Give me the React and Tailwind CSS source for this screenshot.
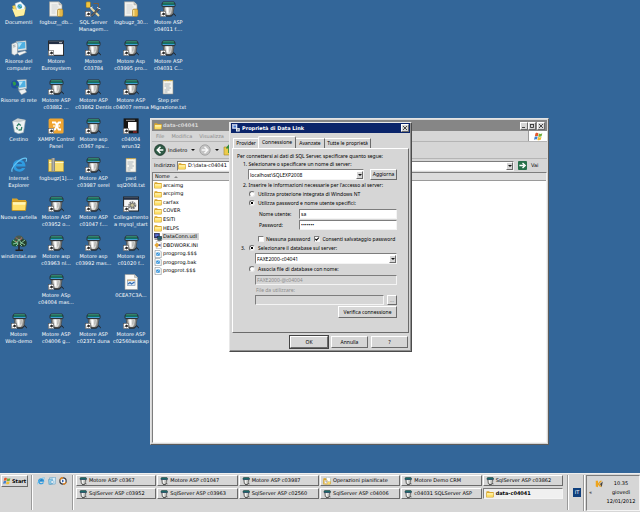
import React from 'react';

const raised = 'border border-t-white border-l-white border-r-[#6b6b6b] border-b-[#6b6b6b] bg-[#d6d6d6]';
const sunken = 'border border-t-[#7d7d7d] border-l-[#7d7d7d] border-r-[#f4f4f4] border-b-[#f4f4f4]';

/* ---------- icons ---------- */

function Shortcut() {
  return (
    <g>
      <rect x="0.3" y="10.300" width="5.400" height="5.400" fill="#fff" stroke="#3b3b3b" strokeWidth="0.5" />
      <path d="M1.600 14.800c0-1.900.8-2.500 1.700-2.500V11.200l2 1.800-2 1.700v-1.100c-.9 0-1.300.4-1.700 1.200z" fill="#111" />
    </g>
  );
}

function Engine() {
  return (
    <g>
      <path d="M3 .4h11l1.500 2.400v2.400l-1.300.8H3L1.500 5.200V2.800z" fill="#2a3138" />
      <path d="M3.400 1.300h10.200l.8 1.200H2.600z" fill="#35a07c" />
      <path d="M2.300 2.900h12.400v1.300H2.300z" fill="#0a7468" />
      <path d="M2.600 4.500h12" stroke="#4fb4f4" strokeWidth=".8" />
      <path d="M3.200 6h10.800l-1 6.500-2.500 2.500H6.500L4 12.300z" fill="#8b8b88" stroke="#3a3a3a" strokeWidth=".6" />
      <path d="M5 6.200h7l-.8 5.500-1.700 2.200H7.300L5.800 11.500z" fill="#d9d9d6" />
      <path d="M6.200 6.500h2.200v6H7z" fill="#fff" />
      <path d="M10.200 7l-.4 4.500" stroke="#9b9b98" strokeWidth=".8" />
      <path d="M6 15h5.200c1.500 0 1.300-2.300 2.700-2.300.9 0 .6 2 1.900 2.200" fill="none" stroke="#202020" strokeWidth="1" />
    </g>
  );
}

function Folder() {
  return (
    <g>
      <path d="M1 2.500h5l1.500 1.500h7.500v10H1z" fill="#dba52a" />
      <path d="M1 5.500h14.500L14.500 14.500H1z" fill="#ffe06a" stroke="#c08f1c" strokeWidth=".8" />
      <path d="M2 6.300h12.500l-.3 2.500H2z" fill="#fff6b8" />
    </g>
  );
}

const art = {
  engine: <><Engine /><Shortcut /></>,
  engineSmall: <Engine />,
  folder: <Folder />,
  docs: (
    <g>
      <path d="M1.500 5l5-1 8 2-1.500 8-8.500 1.500z" fill="#f5d75a" stroke="#c9a63a" strokeWidth=".5" />
      <path d="M4 2.500L9.500.6l4.500 4.500-.8 5-7 1z" fill="#f4fbff" stroke="#9fb3bf" strokeWidth=".5" />
      <circle cx="8.700" cy="5.500" r="2.400" fill="#58b4e0" />
      <path d="M7.200 4.600l2.200 2 1.500-.6" stroke="#2b8a57" strokeWidth=".9" fill="none" />
      <path d="M1 7.500l6 1.500 7.500-1.500-1.700 6.800-8.300 1.400z" fill="#fff0a0" />
    </g>
  ),
  dbfile: (
    <g>
      <path d="M1.500.8h9.500l3 3v11.400H1.500z" fill="#f2f2ee" stroke="#9a9a95" strokeWidth=".6" />
      <path d="M11 .8v3h3" fill="#cfcfca" stroke="#9a9a95" strokeWidth=".5" />
      <path d="M3.500 4h6M3.500 6h7M3.500 8h6M3.500 10h4M3.500 12h4" stroke="#c3c7c9" strokeWidth=".7" />
      <rect x="9.500" y="8" width="5.500" height="7.500" rx="1.500" fill="#e5b84a" stroke="#8d6b1d" strokeWidth=".5" />
      <path d="M10.800 9v6" stroke="#fff0ac" strokeWidth="1" />
    </g>
  ),
  sql: (
    <g>
      <rect x="1" y=".8" width="4.500" height="6" rx="1" fill="#f0c53e" stroke="#86661b" strokeWidth=".5" />
      <path d="M8.500 2.500h5v4" fill="none" stroke="#8a5a2c" strokeWidth=".8" />
      <path d="M6 7l8 8" stroke="#ecd9a0" strokeWidth="2" />
      <path d="M14.500 7l-8 8" stroke="#2a2a2a" strokeWidth="1.800" />
      <path d="M14.500 7l-8 8" stroke="#bdbdbd" strokeWidth=".7" />
      <path d="M12 6.500l3.500 1.500M5 7l2.500-1" stroke="#eee" strokeWidth="1" />
      <Shortcut />
    </g>
  ),
  computer: (
    <g>
      <path d="M5 1.500l10-.8.500 9-8.500 1.300z" fill="#e2e7e9" stroke="#8b969c" strokeWidth=".5" />
      <path d="M6.200 2.600l7.900-.6.300 6.200-7.200 1z" fill="#4fb0e2" />
      <path d="M7 3.200l4-.3-3.300 5z" fill="#b5e6fa" />
      <path d="M.8 4l3.700-1.500 2 1v10l-3.200 1.800L.8 13.700z" fill="#eef1f1" stroke="#8a9498" strokeWidth=".5" />
      <path d="M2 5.500l2.500-.5M2 7l2.500-.4" stroke="#6f7b80" strokeWidth=".6" />
      <path d="M6 12.800l8-2 1.700 1.500-7.200 3.200z" fill="#f5f6f6" stroke="#8a9498" strokeWidth=".5" />
    </g>
  ),
  network: (
    <g>
      <path d="M6 1l9.300-.5.400 9-7.900 1.300z" fill="#e2e7e9" stroke="#8b969c" strokeWidth=".5" />
      <path d="M7.200 2.200l7.100-.4.300 6.200-6.500.8z" fill="#4fb0e2" />
      <path d="M8 2.800l4-.2-3.300 5z" fill="#b5e6fa" />
      <circle cx="4" cy="5.500" r="4" fill="#1d4f9c" />
      <path d="M1.500 3.500c2-2 3-.5 3.500.8s-1 2.700-2.300 2.500M5 7.500l2-1-.6 2.200z" fill="#2f9a4a" />
      <path d="M7.500 11.500l6.500-1.700 1.700 3.200-5.200 2.800z" fill="#eff2f2" stroke="#8a9498" strokeWidth=".5" />
    </g>
  ),
  blankwin: (
    <g>
      <rect x=".6" y="1" width="15" height="14.300" fill="#fff" stroke="#1f2023" strokeWidth="1" />
      <rect x="1" y="1.300" width="14.200" height="2.800" fill="#222e44" />
      <path d="M11 2.700h3" stroke="#e3e3e3" strokeWidth=".8" />
      <Shortcut />
    </g>
  ),
  text: (
    <g>
      <path d="M3 1.500h10v13.500H3z" fill="#f4f4ee" stroke="#8d8d86" strokeWidth=".6" />
      <path d="M3.500 1.700h9" stroke="#d5a92e" strokeWidth="1.200" strokeDasharray="1 .6" />
      <path d="M4.500 5h6M4.500 7h5M6 9h5M4.500 11h5M4.500 13h3" stroke="#8b98a4" strokeWidth=".7" />
    </g>
  ),
  bin: (
    <g>
      <path d="M1.500 3.500L6.500.6l8 1.500-2 12.500-5 1.200-4-1.700z" fill="#eef3f4" stroke="#94a3a8" strokeWidth=".6" />
      <path d="M1.500 3.500l6 1 7-2.300L7.500.8z" fill="#c4ced1" />
      <path d="M6 8l1.800-2.200 2 1.700M10.800 9l-.6 2.800-2.700.2M6.500 11.500l-1-2.500" stroke="#2d7e63" strokeWidth="1.300" fill="none" />
    </g>
  ),
  xampp: (
    <g>
      <rect x=".6" y=".4" width="15" height="15" rx="1.500" fill="#f0a531" />
      <path d="M4 4.500h3.500l3 7H13M4.500 11.500H7l3.500-7H13" fill="none" stroke="#fff" strokeWidth="1.800" strokeLinejoin="round" />
      <path d="M5 8h7" stroke="#fff" strokeWidth="1.200" />
      <Shortcut />
    </g>
  ),
  wrun: (
    <g>
      <rect x=".6" y=".4" width="15" height="15" fill="#151515" />
      <rect x="5" y="4" width="8.500" height="8.500" fill="#fff" />
      <path d="M3 2.300h9" stroke="#8f8f8f" strokeWidth="1" />
      <path d="M10 14h4" stroke="#c33" strokeWidth="1" />
      <Shortcut />
    </g>
  ),
  ie: (
    <g>
      <path d="M14.500 9.400H5c.2 3 4.400 3.800 6 1.600h3.200c-2 5.400-12.200 5-12.200-2.500C2 1 14.600.1 14.500 9.400z" fill="#2f9be0" />
      <path d="M5.200 6.900h6c-.6-2.700-5.200-2.800-6 0z" fill="#2d6aa6" />
      <path d="M1.200 14.800C-.8 11.500 7.500 2 14 1.200c2.300-.2 2 1.800.8 3.500" fill="none" stroke="#65c4f4" strokeWidth="1.200" />
    </g>
  ),
  zip: (
    <g>
      <path d="M.5 2.500h5.500l1 1.500h8.700V14.500H.5z" fill="#f7dc6c" stroke="#a98c33" strokeWidth=".6" />
      <path d="M1 5.500h14.500" stroke="#fff8cc" strokeWidth="1" />
      <rect x="3.500" y="1" width="3.500" height="13.500" fill="#8b8b85" />
      <path d="M5.200 1.500v12.500" stroke="#f2f2f2" strokeWidth="1" strokeDasharray="1 1" />
    </g>
  ),
  link: (
    <g>
      <rect x=".6" y="1" width="15" height="14" fill="#f5f5f5" stroke="#1f2023" strokeWidth="1" />
      <rect x="1" y="1.300" width="14.200" height="2.500" fill="#222e44" />
      <circle cx="9.300" cy="9.300" r="3" fill="none" stroke="#7c7c7c" strokeWidth="2" strokeDasharray="1.600 .6" />
      <circle cx="9.300" cy="9.300" r="2" fill="#c7c19a" stroke="#444" strokeWidth=".6" />
      <Shortcut />
    </g>
  ),
  windir: (
    <g>
      <circle cx="8" cy="5.500" r="5" fill="#4a5a4e" />
      <circle cx="4" cy="8" r="3.600" fill="#1e5a34" />
      <circle cx="12" cy="8" r="3.800" fill="#24402d" />
      <path d="M2 5l4 3 2-4 2 4 4-3M2 9l4-1 2 2 3-2 3 2M5 11l2-2M11 11L9 9" stroke="#8fcfa8" strokeWidth=".9" fill="none" />
      <path d="M5 2.500l2 2M10.500 2.500l-1 2.500M4 6l2 1" stroke="#c9766c" strokeWidth=".9" />
      <path d="M8 9v5.500M4.500 15.200h7.500" stroke="#26211c" strokeWidth="1.500" />
    </g>
  ),
  sheet: (
    <g>
      <path d="M2 .5h9.500l3 3v12H2z" fill="#fbfbf8" stroke="#9a9a95" strokeWidth=".6" />
      <path d="M11.500.5v3h3" fill="#cfcfca" stroke="#9a9a95" strokeWidth=".5" />
      <rect x="4.500" y="6" width="7.500" height="5.500" fill="#dce9f5" stroke="#6e8dac" strokeWidth=".6" />
      <path d="M5 10l2-1.500 1.500 1.500L11.500 8" stroke="#2f6cb5" strokeWidth="1.200" fill="none" />
      <path d="M4.500 6.200h7.500" stroke="#e29a38" strokeWidth=".9" />
    </g>
  ),
  bat: (
    <g>
      <path d="M2 .8h9.500l3 3v11.600H2z" fill="#fdfdfd" stroke="#7c868c" strokeWidth="1.200" />
      <rect x="4.500" y="5" width="7" height="6.500" rx="1" fill="#2f8fd8" />
      <path d="M6 10l4-3.500" stroke="#d9f0ff" strokeWidth="1.300" />
    </g>
  ),
  udl: (
    <g>
      <rect x=".5" y=".5" width="10.500" height="9.500" fill="#2b2f7d" stroke="#1b1b1b" strokeWidth=".8" />
      <rect x="2.500" y="2.500" width="6.500" height="4.500" fill="#5e78d6" />
      <rect x="7" y="6.500" width="8.500" height="7" fill="#225e70" stroke="#1b1b1b" strokeWidth=".8" />
      <path d="M1 12.500h6M7 15h8.500" stroke="#444" strokeWidth="1.500" />
    </g>
  ),
  ini: (
    <g>
      <path d="M4.500.8h7.500l3 3v11.600H4.500z" fill="#fdfdfd" stroke="#9a9a9a" strokeWidth="1" />
      <path d="M.5 8L6 3.500 11 8l-5 5.500z" fill="#e7a837" />
      <path d="M8 8l5-2.500v6z" fill="#404a9c" />
    </g>
  ),
  datalink: (
    <g>
      <rect x="1" y="1" width="9" height="8" fill="#cfe0f6" stroke="#eef" strokeWidth="1" />
      <rect x="3" y="3" width="5" height="4" fill="#4779cf" />
      <rect x="8" y="8" width="7.500" height="7" fill="#e8edf6" />
      <path d="M10 10.500h4M10 12.500h3" stroke="#345" strokeWidth="1" />
    </g>
  ),
  flag: (
    <g>
      <path d="M2.500 2.500c2-1.500 3.800-1 5.300-.2L6.700 7.500c-1.500-.8-3.200-.8-5.200.3z" fill="#e4582c" />
      <path d="M8.700 2.700c2 1 4 .8 6-.3L13.500 7.700c-2 1-4 1-6 .1z" fill="#6fae3a" />
      <path d="M1.200 8.800c2-1.200 3.700-1 5.200-.2L5.200 13.500c-1.500-.8-3.200-.8-5.200.4z" fill="#3f7fd0" />
      <path d="M7.300 8.900c2 1 4 .9 6-.1L12 13.800c-2 1-4 1-6 .2z" fill="#f0bd33" />
    </g>
  ),
  mail: (
    <g>
      <path d="M3 1.500l12-1-.5 13.500L4 15z" fill="#d8eefa" stroke="#4f93bd" strokeWidth="1" />
      <path d="M.8 5l8-1.500v10l-7 1.300z" fill="#8fcdea" stroke="#3b83b0" strokeWidth=".8" />
      <path d="M6 8h5.500v4H6z" fill="#fff" stroke="#3b83b0" strokeWidth=".7" />
    </g>
  ),
  player: (
    <g>
      <circle cx="8" cy="8" r="6.300" fill="#f8f8f8" stroke="#3b3d43" strokeWidth="2.400" />
      <path d="M2 5.500A6.500 6.500 0 0 1 8 1.500M14 10.500A6.500 6.500 0 0 1 8 14.500" stroke="#eb8a21" strokeWidth="2.600" fill="none" />
      <path d="M6 5l4.500 3L6 11z" fill="#2f5fb0" />
    </g>
  ),
  tasks: (
    <g>
      <Folder />
      <path d="M7 .5l8 1v7l-8 1z" fill="#fff" stroke="#8aa" strokeWidth=".7" />
      <circle cx="6" cy="10" r="3.800" fill="#f3f6f9" stroke="#c78c26" strokeWidth="1" />
      <path d="M6 7.800V10h2" stroke="#444" strokeWidth=".8" fill="none" />
    </g>
  ),
  tray: (
    <g>
      <path d="M1.500 1.500h4.500v5l4.500-5h4L8.500 7.500 14 14.500l-5-1.500L6 9.500V14.500L1.500 13z" fill="#eda41d" />
      <path d="M10 8l5.500-5-2 11z" fill="#4b443a" />
    </g>
  ),
};

function Icon({ name, className }) {
  return (
    <svg viewBox="0 0 16 16" className={`shrink-0 ${className}`} aria-hidden="true">
      {art[name]}
    </svg>
  );
}

/* ---------- desktop ---------- */

const shortcuts = [
  ['docs', 'Documenti'], ['dbfile', 'fogbuz__db...'], ['sql', 'SQL Server', 'Managem...'], ['dbfile', 'fogbugz_30...'], ['engine', 'Motore ASP', 'c04011 f....'],
  ['computer', 'Risorse del', 'computer'], ['blankwin', 'Motore', 'Eurosystem'], ['engine', 'Motore', 'C03784'], ['engine', 'Motore Asp', 'c03995 pro...'], ['engine', 'Motore ASP', 'c04031 C...'],
  ['network', 'Risorse di rete'], ['engine', 'Motore ASP', 'c03882 ...'], ['engine', 'Motore ASP', 'c03862 Dentis'], ['engine', 'Motore ASP', 'c04007 remsa'], ['text', 'Step per', 'Migrazione.txt'],
  ['bin', 'Cestino'], ['xampp', 'XAMPP Control', 'Panel'], ['engine', 'Motore asp', 'c0367 npv...'], ['wrun', 'c04004', 'wrun32'], null,
  ['ie', 'Internet', 'Explorer'], ['zip', 'fogbugz[1]....'], ['engine', 'Motore ASP', 'c03987 serel'], ['text', 'pwd', 'sql2008.txt'], null,
  ['folder', 'Nuova cartella'], ['engine', 'Motore ASP', 'c03952 o...'], ['engine', 'Motore ASP', 'c01047 f....'], ['link', 'Collegamento', 'a mysql_start'], null,
  ['windir', 'windirstat.exe'], ['engine', 'Motore asp', 'c03963 nl...'], ['engine', 'Motore asp', 'c03992 mas...'], ['engine', 'Motore asp', 'c01020 f...'], null,
  null, ['engine', 'Motore ASp', 'c04004 mas...'], null, ['sheet', '0CEA7C3A...'], null,
  ['engine', 'Motore', 'Web-demo'], ['engine', 'Motore ASP', 'c04006 g...'], ['engine', 'Motore ASP', 'c02371 duna'], ['engine', 'Motore ASP', 'c02560asskap'], null,
];

function DesktopIcons() {
  return (
    <div className="grid w-[187px] auto-rows-[39px] grid-cols-5">
      {shortcuts.map((s, i) =>
        s ? (
          <button key={i} type="button" className="flex min-w-0 flex-col items-center gap-0.5 pt-px text-[5px] leading-[7px] text-white">
            <Icon name={s[0]} className="size-4" />
            <span className="text-center whitespace-nowrap">
              {s[1]}
              {s[2] && <><br />{s[2]}</>}
            </span>
          </button>
        ) : (
          <span key={i} />
        )
      )}
    </div>
  );
}

/* ---------- explorer window ---------- */

const files = [
  ['folder', 'arcaimg'], ['folder', 'arcpimg'], ['folder', 'carfax'], ['folder', 'COVER'], ['folder', 'ESITI'], ['folder', 'HELPS'],
  ['udl', 'DataConn.udl'], ['ini', 'DBDWORK.INI'], ['bat', 'progprog.$$$'], ['bat', 'progprog.bak'], ['bat', 'progprot.$$$'],
];

function CaptionButton({ label, children }) {
  return (
    <button type="button" aria-label={label} className={`grid h-2 w-2 place-items-center ${raised}`}>
      <svg viewBox="0 0 6 6" className="size-1.5" fill="none" stroke="#222" strokeWidth="0.8">{children}</svg>
    </button>
  );
}

function Arrow({ className }) {
  return (
    <svg viewBox="0 0 4 2" className={`h-0.5 w-1 ${className}`} aria-hidden="true"><path d="M0 0h4L2 2z" fill="#111" /></svg>
  );
}

function Explorer() {
  return (
    <section className="absolute top-[118px] right-[91px] bottom-[28px] left-[150px] flex flex-col border border-t-[#e4e4e4] border-l-[#e4e4e4] border-r-[#5c5c5c] border-b-[#5c5c5c] bg-[#d6d6d6] p-px text-[5px] leading-[7px]">
      <header className="flex h-[11px] items-center gap-px bg-[#868686] px-0.5 font-bold text-[#d6d6d6]">
        <Icon name="folder" className="size-2" />
        <h1 className="flex-1">data-c04041</h1>
        <div className="flex">
          <CaptionButton label="Riduci a icona"><path d="M1 4.500h3" /></CaptionButton>
          <CaptionButton label="Ingrandisci"><path d="M1 1.500h4M1.500 1.500v3h3v-3" /></CaptionButton>
          <span className="w-px" />
          <CaptionButton label="Chiudi"><path d="M1 1l4 4M5 1L1 5" /></CaptionButton>
        </div>
      </header>
      <nav className="flex h-[11px] items-center border-b border-[#b5b5b5] text-[#8a8a8a]">
        <div className="flex flex-1 gap-[7px] pl-1">
          <button type="button">File</button>
          <button type="button">Modifica</button>
          <button type="button">Visualizza</button>
        </div>
        <div className="grid h-full w-[19px] place-items-center border-l border-[#9a9a9a] bg-white">
          <Icon name="flag" className="size-[9px]" />
        </div>
      </nav>
      <div className="flex h-[17px] items-center gap-0.5 border-b border-[#b5b5b5] px-0.5">
        <button type="button" className="flex items-center gap-0.5">
          <svg viewBox="0 0 12 12" className="size-3"><circle cx="6" cy="6" r="5.400" fill="#2f5c46" stroke="#1c3328" strokeWidth=".8" /><path d="M6.500 2.800L3.300 6l3.200 3.200M3.500 6H9.300" stroke="#fff" strokeWidth="1.500" fill="none" /></svg>
          Indietro
        </button>
        <Arrow className="mx-0.5" />
        <button type="button" aria-label="Avanti" className="flex items-center">
          <svg viewBox="0 0 12 12" className="size-3"><circle cx="6" cy="6" r="5.200" fill="#c4c4c4" stroke="#9b9b9b" strokeWidth=".8" /><path d="M5.500 2.800L8.700 6 5.500 9.200M8.500 6H2.700" stroke="#f8f8f8" strokeWidth="1.500" fill="none" /></svg>
        </button>
        <Arrow className="mx-0.5" />
        <button type="button" aria-label="Cartella superiore"><svg viewBox="0 0 12 12" className="size-3"><path d="M1 3h4l1 1.500h5V11H1z" fill="#eccb4b" stroke="#a5872b" strokeWidth=".6" /><path d="M6 9V2M3.500 4.500L6 1.500l2.500 3" stroke="#2f8b3d" strokeWidth="1.600" fill="none" /></svg></button>
      </div>
      <div className="flex h-[13px] items-center gap-0.5 px-0.5">
        <label htmlFor="path">Indirizzo</label>
        <div className={`flex h-[10px] flex-1 items-center gap-0.5 bg-white ${sunken}`}>
          <Icon name="folder" className="size-2" />
          <input id="path" defaultValue="D:\data-c04041" className="min-w-0 flex-1 bg-transparent outline-none" />
          <button type="button" aria-label="Apri elenco" className={`grid h-2 w-[7px] place-items-center ${raised}`}><Arrow className="" /></button>
        </div>
        <button type="button" className="flex w-[29px] items-center gap-1 pl-0.5">
          <svg viewBox="0 0 10 10" className="size-[9px]"><rect width="10" height="10" rx="1" fill="#26704a" /><path d="M1.500 5h5M5 2.200L8 5 5 7.800" stroke="#fff" strokeWidth="1.500" fill="none" /></svg>
          Vai
        </button>
      </div>
      <main className={`flex min-h-0 flex-1 flex-col bg-white ${sunken}`}>
        <div className="flex h-2 items-center gap-1 border-b border-[#9a9a9a] bg-[#dcdcdc] pl-0.5">
          Nome
          <svg viewBox="0 0 4 2" className="h-0.5 w-1"><path d="M0 2h4L2 0z" fill="#8a8a8a" /></svg>
        </div>
        <ul className="flex h-[94px] flex-col pl-px">
          {files.map(([icon, name]) => (
            <li key={name} className="flex flex-1 items-center">
              <Icon name={icon} className="size-2" />
              <span className={name === 'DataConn.udl' ? 'bg-[#d6d6d6] pr-0.5 pl-px' : 'pl-px'}>{name}</span>
            </li>
          ))}
        </ul>
      </main>
    </section>
  );
}

/* ---------- data link dialog ---------- */

function Radio({ id, name, label, checked }) {
  return (
    <div className="flex h-[9px] items-center gap-[3px]">
      <input id={id} type="radio" name={name} defaultChecked={checked} className="size-1.5 appearance-none rounded-full border border-t-[#6d6d6d] border-r-[#e8e8e8] border-b-[#e8e8e8] border-l-[#6d6d6d] bg-white checked:bg-[radial-gradient(circle,#000_45%,#fff_55%)]" />
      <label htmlFor={id}>{label}</label>
    </div>
  );
}

function Check({ id, label, checked }) {
  return (
    <div className="flex items-center gap-0.5">
      <span className="grid size-1.5">
        <input id={id} type="checkbox" defaultChecked={checked} className={`peer col-start-1 row-start-1 size-1.5 appearance-none bg-white ${sunken}`} />
        <svg viewBox="0 0 6 6" className="pointer-events-none col-start-1 row-start-1 hidden size-1.5 peer-checked:block"><path d="M1.300 2.800l1.200 1.400L5 1.500" stroke="#000" strokeWidth="1.100" fill="none" /></svg>
      </span>
      <label htmlFor={id}>{label}</label>
    </div>
  );
}

function Combo({ label, value, className }) {
  return (
    <div className={`grid h-[11px] items-center bg-white ${sunken} ${className}`}>
      <select aria-label={label} defaultValue={value} className="col-start-1 row-start-1 w-full appearance-none bg-transparent pl-px outline-none">
        <option>{value}</option>
      </select>
      <span className={`pointer-events-none col-start-1 row-start-1 grid h-2 w-[7px] place-items-center justify-self-end ${raised}`}><Arrow className="" /></span>
    </div>
  );
}

function Btn({ children, className, ...rest }) {
  return <button type="button" className={`grid place-items-center leading-[7px] ${raised} ${className}`} {...rest}>{children}</button>;
}

function DataLinkDialog() {
  return (
    <section role="dialog" aria-labelledby="dlg-title" className="absolute top-[122px] left-[229px] w-[183px] border border-t-[#e8e8e8] border-l-[#e8e8e8] border-r-[#4c4c4c] border-b-[#4c4c4c] bg-[#d6d6d6] font-['Noto_Sans',Arial,sans-serif] text-[5px] leading-[8px] text-black shadow-[inset_-1px_-1px_0_#909090]">
      <header className="mx-px flex h-[10px] items-center gap-0.5 bg-[#0a246a] px-px font-['DejaVu_Sans',sans-serif] font-bold text-white">
        <Icon name="datalink" className="size-2" />
        <h2 id="dlg-title" className="flex-1">Proprietà di Data Link</h2>
        <CaptionButton label="Chiudi"><path d="M1 1l4 4M5 1L1 5" /></CaptionButton>
      </header>
      <div className="px-0.5 pt-[3px] pb-[3px]">
        <div role="tablist" className="flex h-3 items-end pl-px whitespace-nowrap">
          <button role="tab" type="button" className="h-[10px] w-[25px] border-t border-l border-white pb-0.5">Provider</button>
          <button role="tab" aria-selected="true" type="button" className="h-3 w-[38px] rounded-t-xs border-t border-r border-l border-t-white border-r-[#6b6b6b] border-l-white pb-0.5">Connessione</button>
          <button role="tab" type="button" className="h-[10px] w-[29px] border-t border-r border-t-white border-r-[#6b6b6b] pb-0.5">Avanzate</button>
          <button role="tab" type="button" className="h-[10px] w-[46px] border-t border-r border-t-white border-r-[#6b6b6b] pb-0.5">Tutte le proprietà</button>
        </div>
        <div role="tabpanel" className="border border-t-white border-l-white border-r-[#6b6b6b] border-b-[#6b6b6b] pt-[3px] pr-[11px] pb-[14px] pl-1">
          <p className="whitespace-nowrap">Per connettersi ai dati di SQL Server, specificare quanto segue:</p>
          <p className="pl-1.5">1. Selezionare o specificare un nome di server:</p>
          <div className="mt-px flex gap-1.5 pl-[11px]">
            <Combo label="Nome di server" value="localhost\SQLEXP2008" className="flex-1" />
            <Btn className="h-[11px] w-[27px]">Aggiorna</Btn>
          </div>
          <p className="mt-px pl-1.5 whitespace-nowrap">2. Inserire le informazioni necessarie per l'accesso al server:</p>
          <div className="pl-3">
            <Radio id="nt" name="auth" label="Utilizza protezione integrata di Windows NT" />
            <Radio id="pwd" name="auth" label="Utilizza password e nome utente specifici:" checked />
          </div>
          <div className="mt-0.5 grid auto-rows-[10px] grid-cols-[40px_1fr] items-center gap-y-px pl-[22px]">
            <label htmlFor="user">Nome utente:</label>
            <input id="user" defaultValue="sa" className={`h-full w-full min-w-0 bg-white pl-px outline-none ${sunken}`} />
            <label htmlFor="pass">Password:</label>
            <input id="pass" type="password" defaultValue="xxxxxxx" className={`h-full w-full min-w-0 bg-white pl-px outline-none ${sunken}`} />
          </div>
          <div className="-mr-2 mt-1 flex h-[9px] items-center gap-1 pl-[21px] whitespace-nowrap">
            <Check id="nopass" label="Nessuna password" />
            <Check id="save" label="Consenti salvataggio password" checked />
          </div>
          <div className="flex items-center gap-0.5 pl-1">
            <span className="w-1.5">3.</span>
            <Radio id="db" name="source" label="Selezionare il database sul server:" checked />
          </div>
          <div className="pl-[18px]">
            <Combo label="Database" value="FAXE2000-c04041" className="mt-px" />
          </div>
          <div className="pl-3">
            <Radio id="file" name="source" label="Associa file di database con nome:" />
          </div>
          <div className="mt-0.5 pl-[18px] text-[#8c8c8c]">
            <input aria-label="Nome del database" disabled defaultValue="FAXE2000-@c04004" className={`block h-[10px] w-full pl-px ${sunken}`} />
            <label htmlFor="used" className="mt-px block h-[9px] pl-px">File da utilizzare:</label>
            <div className="flex gap-[3px]">
              <input id="used" disabled className={`h-[10px] min-w-0 flex-1 ${sunken}`} />
              <Btn className="h-[10px] w-[10px]" disabled>...</Btn>
            </div>
          </div>
          <Btn className="mt-px ml-auto h-3 w-[59px]">Verifica connessione</Btn>
        </div>
        <div className="mt-[3px] flex justify-end gap-[3px] pr-px">
          <Btn className="h-3 w-[38px] shadow-[0_0_0_1px_#444]">OK</Btn>
          <Btn className="h-3 w-[37px]">Annulla</Btn>
          <Btn className="h-3 w-[37px]">?</Btn>
        </div>
      </div>
    </section>
  );
}

/* ---------- taskbar ---------- */

const tasks = [
  ['engineSmall', 'Motore ASP c0367'], ['engineSmall', 'Motore ASP c01047'], ['engineSmall', 'Motore ASP c03987'], ['tasks', 'Operazioni pianificate'], ['engineSmall', 'Motore Demo CRM'], ['engineSmall', 'SqlServer ASP c03862'],
  ['engineSmall', 'SqlServer ASP c03952'], ['engineSmall', 'SqlServer ASP c03963'], ['engineSmall', 'SqlServer ASP c02560'], ['engineSmall', 'SqlServer ASP c04006'], ['engineSmall', 'c04031 SQLServer ASP'], ['folder', 'data-c04041'],
];

function Divider() {
  return <span className="w-0.5 border-r border-l border-r-white border-l-[#9a9a9a]" />;
}

function Taskbar() {
  return (
    <footer className="flex h-[39px] shrink-0 border-t border-[#eeeeee] bg-[#d6d6d6] py-px pl-px text-[5px] leading-[7px]">
      <button type="button" className={`flex h-3 w-[27px] items-center gap-px px-px font-bold ${raised}`}>
        <Icon name="flag" className="size-2" />
        Start
      </button>
      <div className="ml-[3px] flex gap-1 pb-px">
        <Divider />
        <div className="flex w-[31px] items-start gap-[3px] pt-0.5">
          <button type="button" aria-label="Internet Explorer"><Icon name="ie" className="size-2" /></button>
          <button type="button" aria-label="Outlook"><Icon name="mail" className="size-2" /></button>
          <button type="button" aria-label="Media Player"><Icon name="player" className="size-2" /></button>
        </div>
        <Divider />
      </div>
      <div className="ml-0.5 grid min-w-0 flex-1 auto-rows-[11px] grid-cols-6 gap-x-px gap-y-0.5">
        {tasks.map(([icon, name]) => (
          <button key={name} type="button" className={name === 'data-c04041' ? `flex items-center gap-0.5 bg-[#f0f0f0] pl-0.5 font-bold whitespace-nowrap ${sunken}` : `flex items-center gap-0.5 pl-0.5 whitespace-nowrap ${raised}`}>
            <Icon name={icon} className="size-2" />
            {name}
          </button>
        ))}
      </div>
      <div className="ml-1 flex gap-1 pr-0.5 pb-px">
        <Divider />
        <span className="mt-[13px] grid h-[9px] w-2 place-items-center bg-[#0f3f7d] text-white">IT</span>
      </div>
      <Divider />
      <div className={`ml-px flex w-[54px] ${sunken}`}>
        <div className="flex w-4 flex-col items-end pt-1 pl-px">
          <Icon name="tray" className="size-2" />
          <span className="mt-px self-start pl-px">«</span>
        </div>
        <div className="flex-1 pt-[3px] text-center leading-[9px]">
          <p>10.35</p>
          <p>giovedì</p>
          <p>12/01/2012</p>
        </div>
      </div>
    </footer>
  );
}

export default function App() {
  return (
    <div className="flex min-h-screen flex-col bg-[#336699] font-['DejaVu_Sans',Verdana,sans-serif] text-black">
      <div className="relative flex-1 overflow-hidden">
        <DesktopIcons />
        <Explorer />
        <DataLinkDialog />
      </div>
      <Taskbar />
    </div>
  );
}
